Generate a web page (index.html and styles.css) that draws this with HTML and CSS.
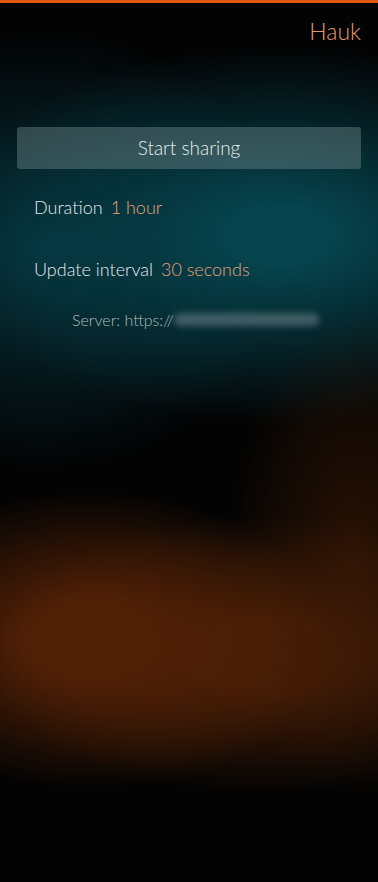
FILE: index.html
```html
<!DOCTYPE html>
<html>
<head>
<meta charset="utf-8">
<link rel="stylesheet" href="styles.css">
</head>
<body>
<div class="screen">
  <div class="topbar"></div>
  <header class="header"><span class="title">Hauk</span></header>
  <main class="content">
    <button class="btn">Start sharing</button>
    <div class="row row-duration"><span class="label">Duration</span><span class="value">1 hour</span></div>
    <div class="row row-interval"><span class="label">Update interval</span><span class="value">30 seconds</span></div>
    <div class="server"><span>Server: https://</span><span class="blur"></span></div>
  </main>
</div>
</body>
</html>
```
FILE: styles.css
```css
* { box-sizing: border-box; }
html, body { margin: 0; padding: 0; background: #000; }
.screen {
  width: 378px;
  height: 882px;
  overflow: hidden;
  font-family: "Lato", sans-serif;
  background:
    radial-gradient(ellipse 240px 150px at 90px 640px, rgba(80,32,6,1) 25%, rgba(80,32,6,0) 100%),
    radial-gradient(ellipse 270px 140px at 260px 655px, rgba(66,28,6,1) 25%, rgba(66,28,6,0) 100%),
    radial-gradient(ellipse 130px 240px at 355px 560px, rgba(44,19,5,0.95), rgba(44,19,5,0) 100%),
    radial-gradient(ellipse 340px 190px at 280px 235px, rgba(6,68,78,1) 15%, rgba(6,68,78,0) 100%),
    radial-gradient(ellipse 250px 220px at 40px 250px, rgba(6,48,56,1), rgba(6,48,56,0) 100%),
    #030303;
  display: flex;
  flex-direction: column;
}
.topbar { height: 3px; background: #e45a12; flex: none; }
.header {
  height: 59px;
  display: flex;
  justify-content: flex-end;
  align-items: center;
  padding: 0 17px 4px 0;
}
.title { color: #e39a72; font-size: 23px; font-weight: 300; }
.content { padding: 65px 17px 0; display: flex; flex-direction: column; }
.btn {
  height: 42px;
  width: 100%;
  border: none;
  border-radius: 3px;
  background: rgba(150,170,170,0.32);
  color: #e6eeee;
  font-family: inherit;
  font-size: 19px;
  font-weight: 300;
  padding: 0 0 2px;
}
.row { padding-left: 17px; font-size: 18px; font-weight: 300; display: flex; gap: 8px; }
.row-duration { margin-top: 27px; }
.row-interval { margin-top: 40px; }
.label { color: #e2eaec; }
.value { color: #e8a078; }
.server {
  margin-top: 30px;
  padding-left: 55px;
  font-size: 16px;
  font-weight: 300;
  color: #b0bcbe;
  display: flex;
  align-items: center;
}
.blur {
  width: 145px;
  height: 13px;
  margin-left: 0;
  border-radius: 6px;
  background: rgba(120,140,145,0.5);
  filter: blur(3px);
}
```
